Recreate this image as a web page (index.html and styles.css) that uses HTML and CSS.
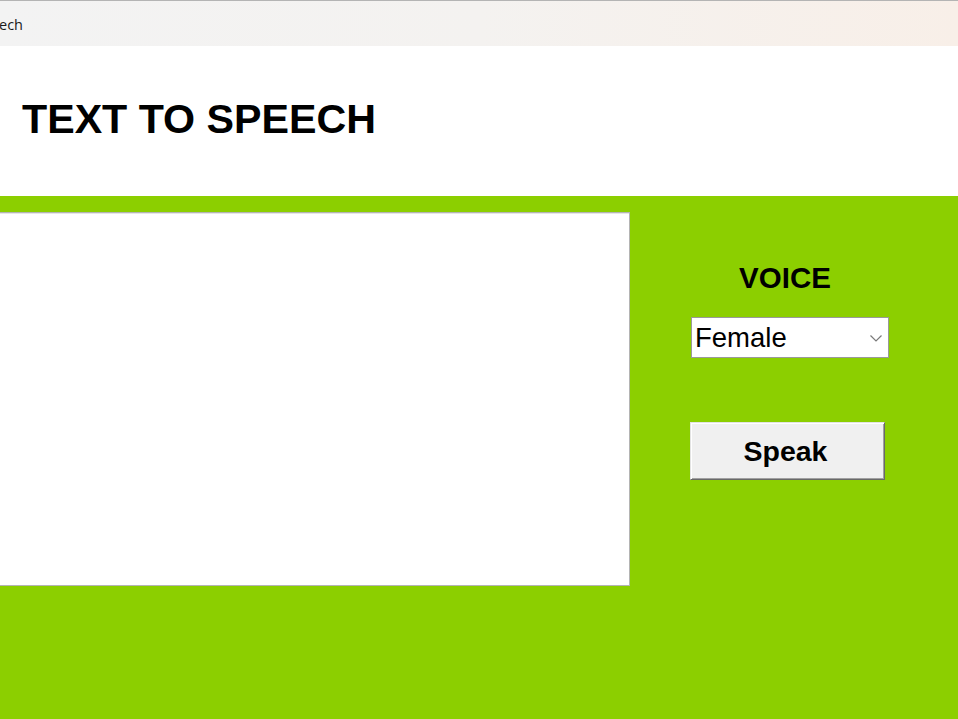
FILE: index.html
```html
<!DOCTYPE html>
<html lang="en">
<head>
<meta charset="utf-8">
<title>Text to Speech</title>
<link rel="stylesheet" href="styles.css">
</head>
<body>
<div class="titlebar"><span class="wintitle">ech</span></div>
<header class="header"><h1 class="title">TEXT TO SPEECH</h1></header>
<main class="main">
  <textarea class="textbox"></textarea>
  <section class="panel">
    <div class="voice-label">VOICE</div>
    <div class="select-wrap">
      <select class="voice-select">
        <option>Female</option>
        <option>Male</option>
      </select>
      <svg class="chevron" width="12" height="7" viewBox="0 0 12 7"><path d="M0.5 0.5 L6 6 L11.5 0.5" fill="none" stroke="#7a7a7a" stroke-width="1.2"/></svg>
    </div>
    <button class="speak-btn">Speak</button>
  </section>
</main>
</body>
</html>
```
FILE: styles.css
```css
html, body {
  margin: 0;
  padding: 0;
  width: 958px;
  height: 719px;
  overflow: hidden;
  background: #ffffff;
  font-family: "Liberation Sans", Arial, sans-serif;
}

.titlebar {
  box-sizing: border-box;
  height: 46px;
  border-top: 1px solid #b4b4b4;
  background: linear-gradient(90deg, #f3f3f3 0%, #f4f2f0 50%, #f8efe8 100%);
  display: flex;
  align-items: center;
}

.wintitle {
  font-family: "Open Sans", "Noto Sans", sans-serif;
  font-size: 14.5px;
  color: #1a1a1a;
  margin-left: -1px;
  padding-top: 1px;
}

.header {
  height: 150px;
  box-sizing: border-box;
  padding: 50px 0 0 22px;
}

.title {
  margin: 0;
  font-size: 41.2px;
  line-height: 46px;
  font-weight: bold;
  color: #000;
}

.main {
  height: 523px;
  background: #8ccf00;
  display: flex;
  align-items: flex-start;
  padding-top: 16px;
  box-sizing: border-box;
}

.textbox {
  box-sizing: border-box;
  width: 630px;
  height: 374px;
  margin: 0;
  border: 1px solid #b4b4b4;
  border-left: none;
  box-shadow: inset 0 1px 0 #e6e6e6;
  background: #fff;
  resize: none;
  outline: none;
  padding: 4px;
}

.panel {
  display: flex;
  flex-direction: column;
  align-items: flex-start;
  margin-left: 60px;
  width: 199px;
}

.voice-label {
  width: 190px;
  margin-top: 49px;
  text-align: center;
  font-size: 29.5px;
  line-height: 34px;
  font-weight: bold;
  color: #000;
}

.select-wrap {
  position: relative;
  margin-top: 22px;
  margin-left: 1px;
  width: 198px;
  height: 41px;
}

.voice-select {
  -webkit-appearance: none;
  appearance: none;
  box-sizing: border-box;
  width: 198px;
  height: 41px;
  margin: 0;
  border: 1px solid #9a9a9a;
  border-radius: 0;
  background: #fff;
  font-family: "Liberation Sans", Arial, sans-serif;
  font-size: 27.5px;
  color: #000;
  padding: 0 0 0 3px;
  outline: none;
}

.chevron {
  position: absolute;
  right: 7px;
  top: 18px;
}

.speak-btn {
  box-sizing: border-box;
  margin-top: 64px;
  width: 195px;
  height: 58px;
  background: #f0f0f0;
  border: 1px solid;
  border-color: #e3e3e3 #696969 #696969 #e3e3e3;
  box-shadow: inset 1px 1px 0 #ffffff, inset -1px -1px 0 #a0a0a0;
  border-radius: 0;
  font-family: "Liberation Sans", Arial, sans-serif;
  font-size: 28.5px;
  font-weight: bold;
  color: #000;
  padding: 0 4px 0 0;
}
```
